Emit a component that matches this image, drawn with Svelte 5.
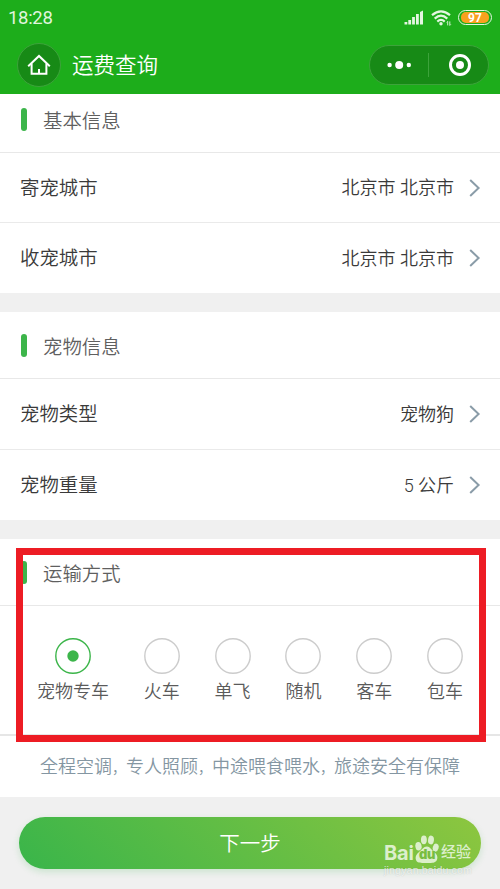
<script>
	const groups = [
		{
			title: '基本信息',
			rows: [
				{ label: '寄宠城市', value: '北京市 北京市' },
				{ label: '收宠城市', value: '北京市 北京市' }
			]
		},
		{
			title: '宠物信息',
			rows: [
				{ label: '宠物类型', value: '宠物狗' },
				{ label: '宠物重量', value: '5 公斤' }
			]
		}
	];

	const modes = ['宠物专车', '火车', '单飞', '随机', '客车', '包车'];
	const notes = ['全程空调', '专人照顾', '中途喂食喂水', '旅途安全有保障'];

	let selected = $state('宠物专车');
</script>

<div class="page">
	<header>
		<div class="status">
			<span class="time">18:28</span>
			<svg class="signal" width="20" height="16" viewBox="0 0 20 16" fill="#e4f6e1">
				<rect x="0.5" y="12" width="2.8" height="2.5" />
				<rect x="4.3" y="10" width="2.8" height="4.5" />
				<rect x="8.1" y="7" width="2.8" height="7.5" />
				<rect x="12" y="4" width="2.8" height="10.5" />
				<path d="M16 2l3-1.5v14h-3z" />
			</svg>
			<svg class="wifi" width="21" height="16" viewBox="0 0 21 16" fill="none" stroke="#e4f6e1" stroke-width="2.2">
				<path d="M1 5.2Q10 -2.6 19 5.2" />
				<path d="M3.7 8.6Q10 2.8 16.3 8.6" />
				<path d="M6.3 11.6Q10 8.2 13.7 11.6" />
				<circle cx="10" cy="13.7" r="1.7" fill="#e4f6e1" stroke="none" />
				<path d="M16.7 15.4v-4l-1 1M18.8 11.4v4l1-1" stroke-width="0.9" />
			</svg>
			<span class="battery"><b>97</b></span>
		</div>
		<nav>
			<button class="home" aria-label="首页">
				<svg width="24" height="22" viewBox="0 0 24 22" fill="none" stroke="#fff" stroke-width="2">
					<path d="M1.2 12.2 12 2l10.8 10.2" />
					<path d="M4.6 9.5v10.3h14.8V9.5M12 20v-5" />
				</svg>
			</button>
			<h1>运费查询</h1>
			<div class="capsule">
				<svg width="26" height="10" viewBox="0 0 26 10" fill="#fff">
					<circle cx="3.6" cy="5" r="2.2" />
					<circle cx="13.2" cy="5" r="4" />
					<circle cx="22.8" cy="5" r="2.2" />
				</svg>
				<i></i>
				<svg width="24" height="24" viewBox="0 0 24 24">
					<circle cx="12" cy="12" r="9.5" fill="none" stroke="#fff" stroke-width="3" />
					<circle cx="12" cy="12" r="4" fill="#fff" />
				</svg>
			</div>
		</nav>
	</header>

	{#each groups as group, i}
		<section>
			<h2 class:first={i === 0}>{group.title}</h2>
			{#each group.rows as row}
				<div class="row" class:short={i === 0}>
					<span class="label">{row.label}</span>
					<span class="value">{row.value}</span>
					<svg width="12" height="18" viewBox="0 0 12 18" fill="none" stroke="#8a9ca8" stroke-width="2">
						<path d="M1.2 1 9.6 9l-8.4 8" />
					</svg>
				</div>
			{/each}
		</section>
	{/each}

	<section>
		<h2>运输方式</h2>
		<div class="modes">
			{#each modes as mode}
				<button class="mode" class:checked={selected === mode} onclick={() => (selected = mode)}>
					<svg width="36" height="36" viewBox="0 0 36 36">
						<circle class="ring" cx="18" cy="18" r="17.2" />
						{#if selected === mode}
							<circle cx="18" cy="18" r="5.7" fill="#3cb54a" />
						{/if}
					</svg>
					<span>{mode}</span>
				</button>
			{/each}
		</div>
		<p class="note">
			{#each notes as note, i}{#if i > 0}<span class="comma">，</span>{/if}{note}{/each}
		</p>
	</section>

	<footer>
		<button class="next">下一步</button>
	</footer>

	<div class="marker"></div>

	<div class="watermark">
		<div class="brand">
			<span class="latin">Bai</span>
			<span class="paw">
				<svg width="24" height="28" viewBox="0 0 27 28" preserveAspectRatio="none" fill="currentColor">
					<ellipse cx="3.9" cy="11.3" rx="3.5" ry="4.3" transform="rotate(-12 3.9 11.3)" />
					<ellipse cx="10" cy="4.8" rx="3.3" ry="4.4" />
					<ellipse cx="18" cy="5" rx="3.3" ry="4.4" transform="rotate(8 18 5)" />
					<ellipse cx="23.3" cy="12.6" rx="3.2" ry="4.1" transform="rotate(18 23.3 12.6)" />
					<path d="M13.4 11.5c3.6 0 4.8 3.3 8 5.4 3 2 4.4 4.4 3.6 7.2-.9 3.1-3.6 3.9-7 3.9H8c-3.400 0-6.600-.6-7.200-3.900-.6-3 1-5.200 3.800-7.200 3.200-2.100 5-5.400 8.800-5.400z" />
				</svg>
				<b>du</b>
			</span>
			<span class="cn">经验</span>
		</div>
		<small>jingyan.baidu.com</small>
	</div>
</div>

<style>
	:global(body) {
		margin: 0;
		background: #f0f0f0;
	}

	.page {
		position: relative;
		width: 500px;
		height: 889px;
		overflow: hidden;
		background: #f0f0f0;
		font-family: Roboto, 'Noto Sans CJK SC', sans-serif;
		font-weight: 350;
		color: #3a3a3a;
	}

	button {
		padding: 0;
		border: 0;
		background: none;
		font: inherit;
		color: inherit;
	}

	svg {
		display: block;
		flex: none;
	}

	header {
		height: 94px;
		background: #1dad1b;
		color: #fff;
	}

	.status {
		display: flex;
		align-items: center;
		box-sizing: border-box;
		height: 36px;
		padding: 0 8px;
	}

	.time {
		margin-right: auto;
		font-size: 18.5px;
		font-weight: 400;
		letter-spacing: -0.3px;
		color: #e0f5de;
	}

	.signal {
		margin-right: 7px;
	}

	.wifi {
		margin-right: 6px;
	}

	.battery {
		box-sizing: border-box;
		width: 34px;
		height: 15px;
		padding: 1px 2px;
		border: 1.5px solid #e4f6e1;
		border-radius: 8px;
		margin-top: -2px;
	}

	.battery b {
		display: block;
		height: 11px;
		border-radius: 5px;
		background: #f9a11f;
		font-size: 12px;
		font-weight: 700;
		line-height: 12px;
		text-align: center;
	}

	nav {
		display: flex;
		align-items: center;
		height: 58px;
		padding: 0 11px 0 17px;
	}

	.home {
		display: grid;
		place-items: center;
		box-sizing: border-box;
		width: 44px;
		height: 44px;
		border: 1px solid #3da33b;
		border-radius: 50%;
		background: #178a16;
	}

	h1 {
		flex: 1;
		margin: 2px 0 0 11px;
		font-size: 21.5px;
		font-weight: 350;
		line-height: 30px;
	}

	.capsule {
		display: flex;
		align-items: center;
		box-sizing: border-box;
		width: 120px;
		height: 40px;
		padding-left: 16px;
		border: 1px solid #3da33b;
		border-radius: 20px;
		background: #178a16;
	}

	.capsule i {
		width: 1px;
		height: 24px;
		margin: 0 19px 0 16px;
		background: #3da33b;
	}

	section {
		box-sizing: border-box;
		background: #fff;
		margin-bottom: 19px;
	}

	h2 {
		display: flex;
		align-items: center;
		box-sizing: border-box;
		height: 67px;
		margin: 0;
		padding-left: 21px;
		border-bottom: 1px solid #e8e8e8;
		font-size: 19.4px;
		font-weight: 350;
		color: #5f5f5f;
	}

	h2::before {
		content: '';
		width: 6px;
		height: 23px;
		margin-right: 16px;
		border-radius: 3px;
		background: #3cb54a;
	}

	h2.first {
		height: 59px;
		padding-bottom: 8px;
	}

	.row {
		display: flex;
		align-items: center;
		box-sizing: border-box;
		height: 71px;
		padding: 0 19px 0 20px;
		border-bottom: 1px solid #eaeaea;
	}

	.row.short,
	.row:last-child {
		height: 70px;
	}

	.row:last-child {
		border: 0;
	}

	.label {
		flex: 1;
		margin-top: -3px;
		font-size: 19.4px;
	}

	.value {
		margin: -3px 15px 0 0;
		font-size: 18px;
	}

	.modes {
		display: flex;
		justify-content: space-between;
		box-sizing: border-box;
		height: 130px;
		padding: 32px 37px 0;
		border-bottom: 2px solid #e6e6e6;
	}

	.mode {
		display: flex;
		flex-direction: column;
		align-items: center;
		gap: 5px;
		font-size: 18px;
		line-height: 26px;
		color: #5a5a5a;
	}

	.mode svg {
		margin-top: -0.5px;
	}

	.ring {
		fill: none;
		stroke: #ccc;
		stroke-width: 1.4;
	}

	.checked .ring {
		stroke: #3cb54a;
	}

	.note {
		height: 61px;
		margin: 0;
		font-size: 18px;
		line-height: 61px;
		text-align: center;
		white-space: nowrap;
		color: #8496a2;
	}

	.comma {
		font-size: 14px;
	}

	footer {
		padding: 1px 19px;
	}

	.next {
		display: block;
		width: 462px;
		height: 52px;
		padding-bottom: 3px;
		border-radius: 26px;
		background: linear-gradient(45deg, #39b54a, #8dc63f);
		box-shadow: 0 3px 7px rgba(57, 181, 74, 0.2);
		font-size: 20.5px;
		color: #fff;
	}

	/* highlight over the transport section */
	.marker {
		position: absolute;
		left: 16px;
		top: 548px;
		box-sizing: border-box;
		width: 470px;
		height: 194px;
		border: 7px solid #ed1c24;
	}

	.watermark {
		position: absolute;
		left: 384px;
		top: 835px;
		width: 90px;
		color: #dcefcb;
		font-weight: 700;
	}

	.brand {
		display: flex;
		align-items: flex-end;
		height: 28px;
	}

	.latin {
		width: 31px;
		height: 23px;
		font-family: Inter, sans-serif;
		font-size: 20px;
		line-height: 27px;
		letter-spacing: -0.2px;
	}

	.paw {
		position: relative;
	}

	.paw b {
		position: absolute;
		left: 4px;
		bottom: 2px;
		font-family: Inter, sans-serif;
		font-size: 13px;
		line-height: 13px;
		letter-spacing: -0.5px;
		color: #78bd40;
	}

	.cn {
		margin-left: 2px;
		height: 22px;
		font-size: 15px;
		font-weight: 500;
		line-height: 23px;
	}

	.watermark small {
		display: block;
		margin-top: 1px;
		font-family: 'Liberation Sans', sans-serif;
		font-size: 10.5px;
		font-weight: 400;
		line-height: 12px;
		letter-spacing: 0.2px;
		white-space: nowrap;
		color: rgba(255, 255, 255, 0.75);
		text-shadow: 0 0 1px rgba(120, 120, 120, 0.4);
	}
</style>
